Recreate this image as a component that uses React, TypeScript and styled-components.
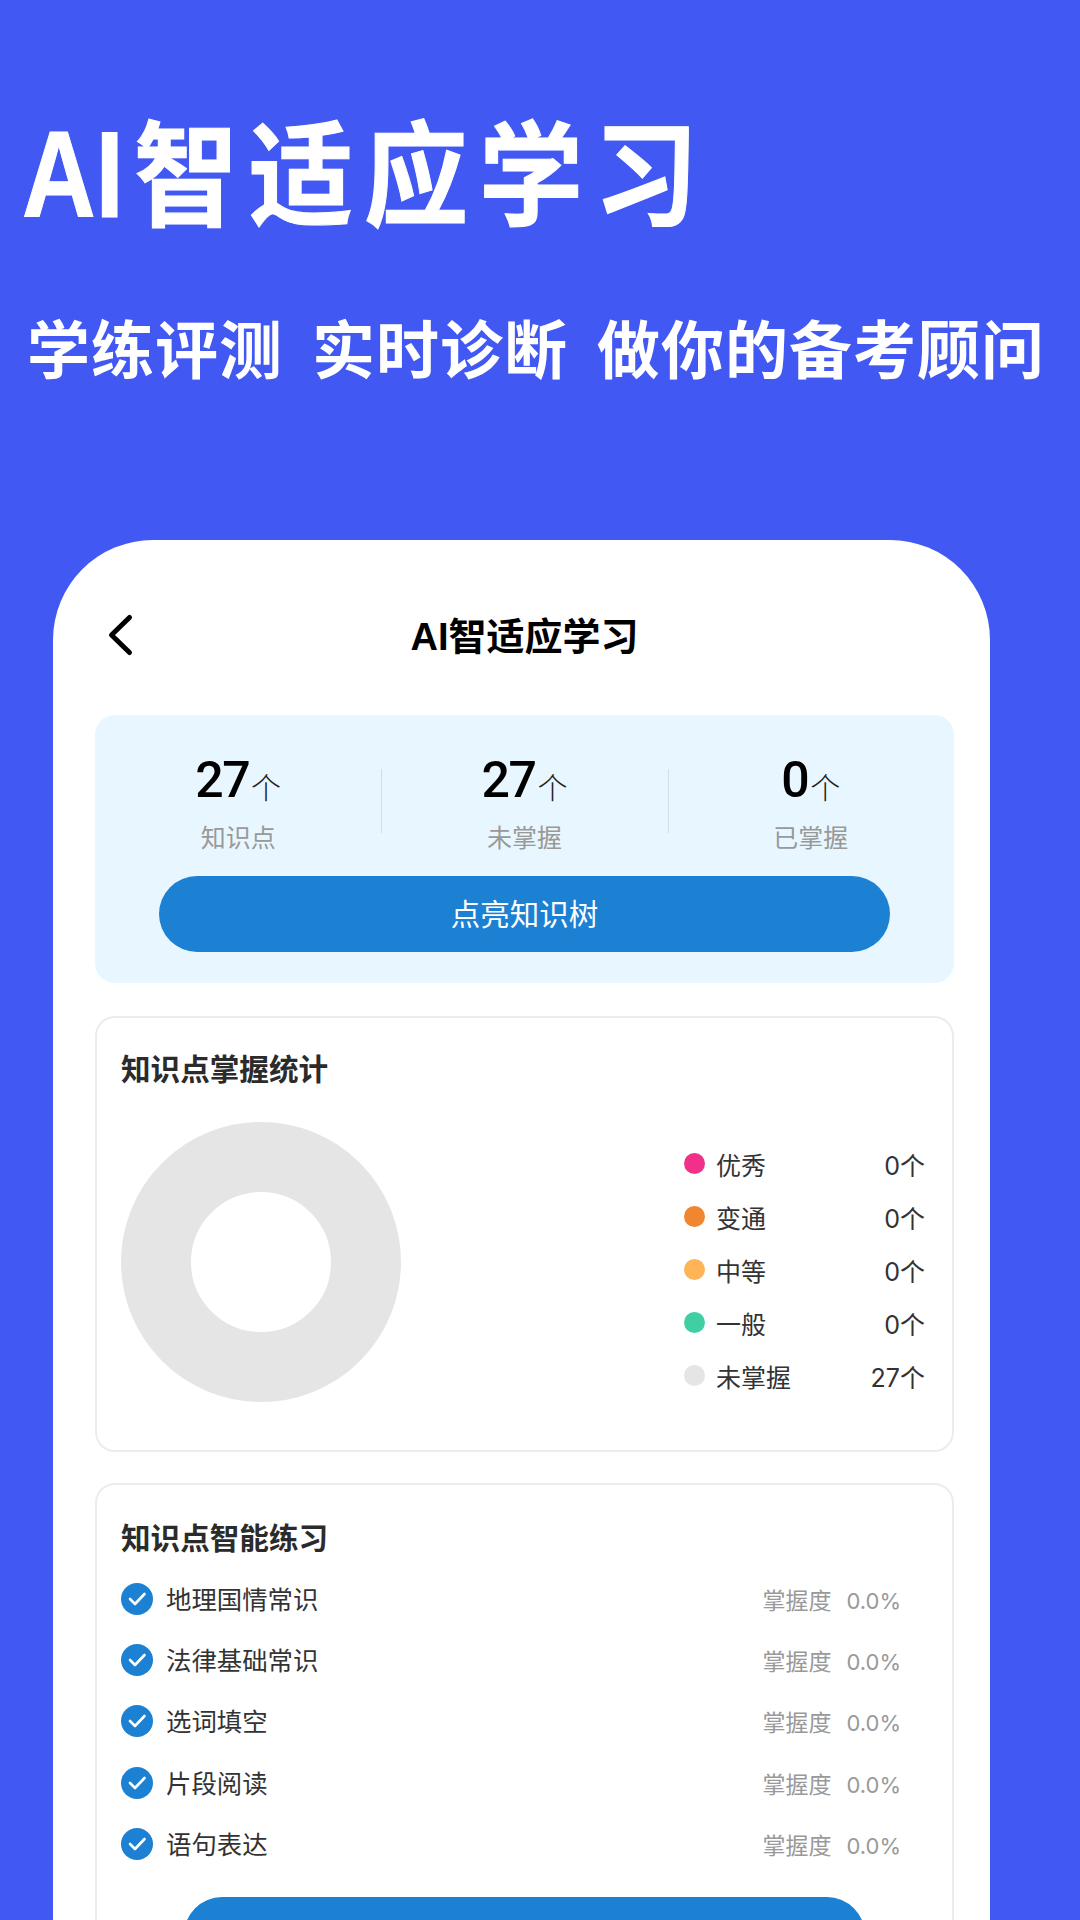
import { ReactElement } from 'react'
import styled, { createGlobalStyle } from 'styled-components'

const GlobalStyle = createGlobalStyle`
  html, body {
    margin: 0;
    padding: 0;
    background: #4258f2;
  }
  * {
    box-sizing: border-box;
  }
`

const CJK = `"Noto Sans CJK SC", sans-serif`
const LATIN_CJK = `Inter, "Noto Sans CJK SC", sans-serif`

const Page = styled.div`
  width: 1080px;
  height: 1920px;
  overflow: hidden;
  background: #4258f2;
  font-family: ${CJK};
`

const Hero = styled.header`
  height: 540px;
  padding: 102px 0 0 22px;
  color: #fff;
`

const HeroTitle = styled.h1`
  margin: 0;
  font-size: 104px;
  line-height: 132px;
  font-weight: 700;
  letter-spacing: 11px;
  white-space: nowrap;
  transform: scaleY(1.09);
  -webkit-text-stroke: 1px #fff;
`

const HeroLatin = styled.span`
  display: inline-block;
  font-family: "Liberation Sans", sans-serif;
  font-size: 112px;
  letter-spacing: 0;
  transform: scaleX(0.91);
  transform-origin: left center;
`

const HeroSub = styled.div`
  display: flex;
  gap: 29px;
  margin: 67px 0 0 5px;
  font-size: 63px;
  line-height: 76px;
  font-weight: 700;
  letter-spacing: 1px;
  white-space: nowrap;
`

const Phone = styled.main`
  width: 937px;
  height: 1380px;
  margin-left: 53px;
  padding: 60px 36px 0 42px;
  background: #fff;
  border-radius: 100px 100px 0 0;
`

const NavBar = styled.div`
  position: relative;
  display: flex;
  align-items: center;
  justify-content: center;
  height: 72px;
  margin-bottom: 43px;
`

const BackButton = styled.svg`
  position: absolute;
  left: 12px;
  top: 13px;
  width: 28px;
  height: 44px;
`

const NavTitle = styled.div`
  margin-top: -6px;
  font-family: "Liberation Sans", ${CJK};
  font-size: 38px;
  font-weight: 700;
  color: #000;
`

const Summary = styled.section`
  height: 268px;
  padding-top: 34px;
  background: #e8f7ff;
  border-radius: 20px;
`

const StatGrid = styled.div`
  display: grid;
  grid-template-columns: repeat(3, 1fr);
`

const Stat = styled.div`
  position: relative;
  display: flex;
  flex-direction: column;
  align-items: center;

  & + &::before {
    content: '';
    position: absolute;
    left: 0;
    top: 20px;
    width: 1px;
    height: 64px;
    background: #d3dde2;
  }
`

const StatValue = styled.div`
  display: flex;
  align-items: baseline;
  height: 62px;
  color: #000;
`

const StatNumber = styled.span`
  font-family: Roboto, sans-serif;
  font-size: 50px;
  line-height: 62px;
  font-weight: 500;
  letter-spacing: -1.5px;
`

const StatUnit = styled.span`
  position: relative;
  top: 2px;
  margin-left: 2px;
  font-size: 30px;
  font-weight: 300;
  line-height: 30px;
  color: #222;
`

const StatLabel = styled.div`
  margin-top: 7px;
  font-size: 25px;
  line-height: 36px;
  color: #999;
`

const PrimaryButton = styled.button<{ $inset: number }>`
  display: block;
  width: calc(100% - ${(p) => p.$inset * 2}px);
  height: 76px;
  margin: 0 auto;
  padding: 0 0 4px;
  border: 0;
  border-radius: 38px;
  background: #1c80d3;
  color: #fff;
  font-family: ${CJK};
  font-size: 29.5px;
  font-weight: 400;
`

const SummaryButton = styled(PrimaryButton)`
  margin-top: 22px;
`

const Card = styled.section`
  margin-top: 33px;
  padding: 30px 24px 0 24px;
  background: #fff;
  border: 2px solid #ececec;
  border-radius: 20px;
`

const ChartCard = styled(Card)`
  height: 436px;
`

const CardTitle = styled.h2`
  margin: 0;
  font-size: 29.6px;
  line-height: 40px;
  font-weight: 700;
  color: #2b2b2b;
`

const ChartBody = styled.div`
  display: flex;
  justify-content: space-between;
  margin-top: 34px;
`

const Donut = styled.svg`
  width: 280px;
  height: 280px;
`

const Legend = styled.ul`
  width: 241px;
  margin: 15px 3px 0 0;
  padding: 0;
  list-style: none;
`

const LegendRow = styled.li`
  display: flex;
  align-items: center;
  height: 53px;
  font-family: ${LATIN_CJK};
  font-size: 25px;
  color: #333;
`

const Dot = styled.span<{ $color: string }>`
  width: 21px;
  height: 21px;
  margin-right: 11px;
  border-radius: 50%;
  background: ${(p) => p.$color};
`

const LegendValue = styled.span`
  margin-left: auto;
`

const PracticeList = styled.ul`
  margin: 12px 0 0;
  padding: 0;
  list-style: none;
`

const PracticeRow = styled.li`
  display: flex;
  align-items: center;
  height: 61.3px;
  font-family: ${LATIN_CJK};
`

const CheckIcon = styled.svg`
  width: 32px;
  height: 32px;
  margin: -2px 13px 0 0;
`

const PracticeName = styled.span`
  font-size: 25.4px;
  line-height: 36px;
  color: #333;
`

const Mastery = styled.span`
  display: flex;
  align-items: baseline;
  gap: 15px;
  margin: 2px 27px 0 auto;
  font-size: 23px;
  line-height: 32px;
  color: #999;
`

const MasteryValue = styled.span`
  font-size: 22px;
`

const PracticeCard = styled(Card)`
  height: 600px;
  margin-top: 31px;
  padding-top: 32px;
`

const PracticeButton = styled(PrimaryButton)`
  margin-top: 22px;
`

const STATS = [
  { value: '27', label: '知识点' },
  { value: '27', label: '未掌握' },
  { value: '0', label: '已掌握' },
]

const LEGEND = [
  { name: '优秀', color: '#f13189', count: 0 },
  { name: '变通', color: '#f0862f', count: 0 },
  { name: '中等', color: '#ffb555', count: 0 },
  { name: '一般', color: '#40cfa5', count: 0 },
  { name: '未掌握', color: '#e5e5e5', count: 27 },
]

const PRACTICE = ['地理国情常识', '法律基础常识', '选词填空', '片段阅读', '语句表达']

export default function App(): ReactElement {
  return (
    <Page>
      <GlobalStyle />
      <Hero>
        <HeroTitle>
          <HeroLatin>AI</HeroLatin>智适应学习
        </HeroTitle>
        <HeroSub>
          <span>学练评测</span>
          <span>实时诊断</span>
          <span>做你的备考顾问</span>
        </HeroSub>
      </Hero>

      <Phone>
        <NavBar>
          <BackButton viewBox='0 0 28 44' fill='none'>
            <path d='M22.5 4.5 L4.5 22 L22.5 39.5' stroke='#000' strokeWidth='5' strokeLinecap='round' strokeLinejoin='round' />
          </BackButton>
          <NavTitle>AI智适应学习</NavTitle>
        </NavBar>

        <Summary>
          <StatGrid>
            {STATS.map((s) => (
              <Stat key={s.label}>
                <StatValue>
                  <StatNumber>{s.value}</StatNumber>
                  <StatUnit>个</StatUnit>
                </StatValue>
                <StatLabel>{s.label}</StatLabel>
              </Stat>
            ))}
          </StatGrid>
          <SummaryButton $inset={64}>点亮知识树</SummaryButton>
        </Summary>

        <ChartCard>
          <CardTitle>知识点掌握统计</CardTitle>
          <ChartBody>
            <Donut viewBox='0 0 280 280'>
              <circle cx='140' cy='140' r='105' fill='none' stroke='#e5e5e5' strokeWidth='70' />
            </Donut>
            <Legend>
              {LEGEND.map((l) => (
                <LegendRow key={l.name}>
                  <Dot $color={l.color} />
                  {l.name}
                  <LegendValue>{l.count}个</LegendValue>
                </LegendRow>
              ))}
            </Legend>
          </ChartBody>
        </ChartCard>

        <PracticeCard>
          <CardTitle>知识点智能练习</CardTitle>
          <PracticeList>
            {PRACTICE.map((name) => (
              <PracticeRow key={name}>
                <CheckIcon viewBox='0 0 32 32'>
                  <circle cx='16' cy='16' r='16' fill='#1c80d3' />
                  <path d='M9 16 L14 21 L23.5 11' fill='none' stroke='#fff' strokeWidth='2.6' strokeLinecap='round' strokeLinejoin='round' />
                </CheckIcon>
                <PracticeName>{name}</PracticeName>
                <Mastery>
                  <span>掌握度</span>
                  <MasteryValue>0.0%</MasteryValue>
                </Mastery>
              </PracticeRow>
            ))}
          </PracticeList>
          <PracticeButton $inset={63} />
        </PracticeCard>
      </Phone>
    </Page>
  )
}
